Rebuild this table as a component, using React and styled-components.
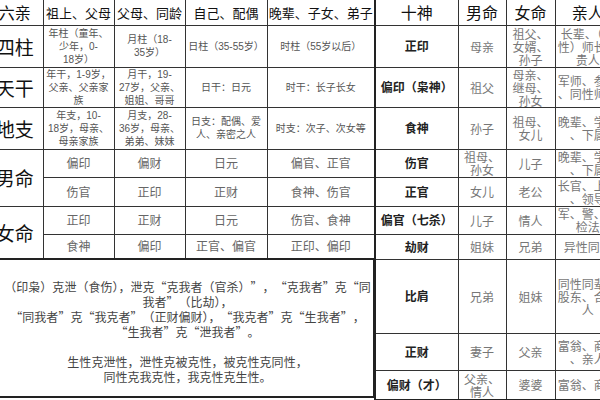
import React from 'react';
import styled, { createGlobalStyle } from 'styled-components';

const GlobalStyle = createGlobalStyle`
  html, body { margin: 0; padding: 0; background: #fff; overflow: hidden; }
  body { font-family: "Noto Sans CJK SC", sans-serif; color: #222; }
`;

const Page = styled.div`
  width: 600px;
  height: 400px;
  overflow: hidden;
  display: flex;
  align-items: flex-start;
`;

const LeftSide = styled.div`
  flex: none;
  width: 390px;
  margin-left: -15px;
  display: flex;
  flex-direction: column;
`;

const RightSide = styled.div`
  flex: none;
  margin-left: -1px;
`;

const Table = styled.table`
  border-collapse: collapse;
  table-layout: fixed;
  width: ${({ $width }) => $width}px;
  border: 2px solid #222;
  border-top: none;
`;

const Row = styled.tr`
  height: ${({ $h }) => $h}px;
`;

const Cell = styled.td`
  border: 1px solid #333;
  padding: 0 1px;
  text-align: center;
  vertical-align: middle;
  white-space: pre;
  overflow: hidden;
`;

const HeadCell = styled(Cell)`
  font-family: "Noto Sans CJK SC", serif;
  font-size: ${({ $big }) => ($big ? '16px' : '13px')};
  color: #111;
  line-height: 1;
  border-top: none;
`;

const LabelCell = styled(Cell)`
  font-size: 19px;
  color: #111;
  line-height: 1;
`;

const InfoCell = styled(Cell)`
  font-family: "Liberation Sans", "Noto Sans CJK SC", sans-serif;
  font-size: 10px;
  line-height: 13px;
  color: #555;
`;

const GodCell = styled(Cell)`
  font-size: 12px;
  line-height: 1;
  color: #666;
`;

const NameCell = styled(Cell)`
  font-size: 12px;
  font-weight: 700;
  line-height: 1;
  color: #222;
`;

const ValueCell = styled(Cell)`
  font-size: 12px;
  line-height: 13px;
  color: #777;
`;

const Notes = styled.div`
  height: 138px;
  box-sizing: border-box;
  border: 2px solid #222;
  border-top: none;
  padding: 19px 0 0 15px;
  font-size: 12px;
  line-height: 15px;
  color: #444;
  display: flex;
  flex-direction: column;
  align-items: center;
`;

const NoteLine = styled.div`
  white-space: nowrap;
  height: 15px;
`;

const Quote = styled.span`
  display: inline-block;
  width: 1em;
  text-align: ${({ $open }) => ($open ? 'right' : 'left')};
`;

const leftCols = [57, 71, 71, 82, 108];
const rightCols = [83, 48, 49, 66];

const infoRows = [
  { label: '四柱', h: 42, cells: ['年柱（童年、\n少年，0-\n18岁）', '月柱（18-\n35岁）', '日柱（35-55岁）', '时柱（55岁以后）'] },
  { label: '天干', h: 39, cells: ['年干，1-9岁，\n父亲、父亲家\n族', '月干，19-\n27岁，父亲、\n姐姐、哥哥', '日干：日元', '时干：长子长女'] },
  { label: '地支', h: 42, cells: ['年支，10-\n18岁，母亲、\n母亲家族', '月支，28-\n36岁，母亲、\n弟弟、妹妹', '日支：配偶、爱\n人、亲密之人', '时支：次子、次女等'] },
];

const fateRows = [
  { label: '男命', rows: [
    { h: 28, cells: ['偏印', '偏财', '日元', '偏官、正官'] },
    { h: 29, cells: ['伤官', '正印', '正财', '食神、伤官'] },
  ] },
  { label: '女命', rows: [
    { h: 28, cells: ['正印', '正财', '日元', '伤官、食神'] },
    { h: 25, cells: ['食神', '偏印', '正官、偏官', '正印、偏印'] },
  ] },
];

const gods = [
  { h: 42, name: '正印', male: '母亲', female: '祖父、\n女婿、\n孙子', kin: '长辈、（异\n性）师长、\n贵人' },
  { h: 40, name: '偏印（枭神）', male: '祖父', female: '母亲、\n继母、\n孙女', kin: '军师、参谋\n、同性师长' },
  { h: 42, name: '食神', male: '孙子', female: '祖母、\n女儿', kin: '晚辈、学生\n、下属' },
  { h: 28, name: '伤官', male: '祖母、\n孙女', female: '儿子', kin: '晚辈、学生\n、下属' },
  { h: 29, name: '正官', male: '女儿', female: '老公', kin: '长官、上司\n、领导' },
  { h: 28, name: '偏官（七杀）', male: '儿子', female: '情人', kin: '军、警、公\n检法' },
  { h: 25, name: '劫财', male: '姐妹', female: '兄弟', kin: '异性同辈' },
  { h: 74, name: '比肩', male: '兄弟', female: '姐妹', kin: '同性同辈、\n股东、合伙\n人' },
  { h: 37, name: '正财', male: '妻子', female: '父亲', kin: '富翁、商人\n、亲人' },
  { h: 30, name: '偏财（才）', male: '父亲、\n情人', female: '婆婆', kin: '富翁、商人' },
];

const notes = [
  '（印枭）克泄（食伤），泄克“克我者（官杀）”，“克我者”克“同',
  '我者”（比劫），',
  '“同我者”克“我克者”（正财偏财），“我克者”克“生我者”，',
  '“生我者”克“泄我者”。',
  '',
  '生性克泄性，泄性克被克性，被克性克同性，',
  '同性克我克性，我克性克生性。',
];

function NoteText({ text }) {
  return Array.from(text).map((ch, i) => {
    if (ch === '“') return <Quote key={i} $open>{ch}</Quote>;
    if (ch === '”') return <Quote key={i}>{ch}</Quote>;
    return ch;
  });
}

function Cols({ widths }) {
  return (
    <colgroup>
      {widths.map((w, i) => <col key={i} style={{ width: w }} />)}
    </colgroup>
  );
}

export default function App() {
  return (
    <Page>
      <GlobalStyle />
      <LeftSide>
        <Table $width={390}>
          <Cols widths={leftCols} />
          <tbody>
            <Row $h={25}>
              <HeadCell $big>六亲</HeadCell>
              <HeadCell>祖上、父母</HeadCell>
              <HeadCell>父母、同龄</HeadCell>
              <HeadCell>自己、配偶</HeadCell>
              <HeadCell>晚辈、子女、弟子</HeadCell>
            </Row>
            {infoRows.map((r) => (
              <Row key={r.label} $h={r.h}>
                <LabelCell>{r.label}</LabelCell>
                {r.cells.map((c, i) => <InfoCell key={i}>{c}</InfoCell>)}
              </Row>
            ))}
            {fateRows.map((g) =>
              g.rows.map((r, ri) => (
                <Row key={g.label + ri} $h={r.h}>
                  {ri === 0 && <LabelCell rowSpan={2}>{g.label}</LabelCell>}
                  {r.cells.map((c, i) => <GodCell key={i}>{c}</GodCell>)}
                </Row>
              ))
            )}
          </tbody>
        </Table>
        <Notes>
          {notes.map((n, i) => (
            <NoteLine key={i}><NoteText text={n} /></NoteLine>
          ))}
        </Notes>
      </LeftSide>
      <RightSide>
        <Table $width={246}>
          <Cols widths={rightCols} />
          <tbody>
            <Row $h={25}>
              <HeadCell $big>十神</HeadCell>
              <HeadCell $big>男命</HeadCell>
              <HeadCell $big>女命</HeadCell>
              <HeadCell $big>亲人</HeadCell>
            </Row>
            {gods.map((g) => (
              <Row key={g.name} $h={g.h}>
                <NameCell>{g.name}</NameCell>
                <ValueCell>{g.male}</ValueCell>
                <ValueCell>{g.female}</ValueCell>
                <ValueCell>{g.kin}</ValueCell>
              </Row>
            ))}
          </tbody>
        </Table>
      </RightSide>
    </Page>
  );
}
